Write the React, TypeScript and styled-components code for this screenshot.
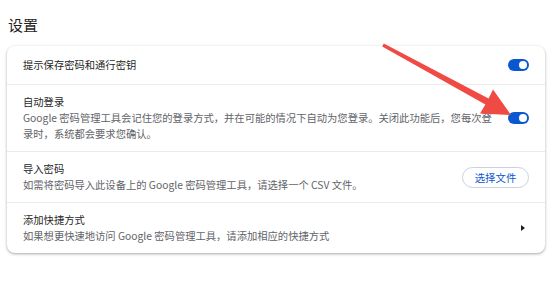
import React from 'react'
import styled, { createGlobalStyle } from 'styled-components'

const GlobalStyle = createGlobalStyle`
  html, body {
    margin: 0;
    padding: 0;
    background: #ffffff;
  }
  body {
    font-family: "Noto Sans CJK SC", "Liberation Sans", sans-serif;
    color: #1f1f1f;
  }
`

const Page = styled.div`
  position: relative;
  width: 554px;
  height: 302px;
  padding: 14px 9px 0 7px;
  box-sizing: border-box;
`

const Heading = styled.h2`
  margin: 0 0 11px 1px;
  font-size: 15px;
  line-height: 21px;
  font-weight: 400;
  color: #1f1f1f;
`

const Card = styled.section`
  background: #fff;
  border-radius: 8px;
  box-shadow: 0 1px 2px rgba(60, 64, 67, 0.3), 0 1px 3px 1px rgba(60, 64, 67, 0.12);
`

const Row = styled.div<{ $first?: boolean }>`
  display: flex;
  align-items: center;
  gap: 14px;
  min-height: 38px;
  box-sizing: border-box;
  padding: 9px 16px;
  border-top: ${(p) => (p.$first ? 'none' : '1px solid #ebebeb')};
`

const Texts = styled.div`
  flex: 1;
  min-width: 0;
  font-size: 10.3px;
  line-height: 16px;
`

const Label = styled.div`
  color: #1f1f1f;
`

const Sub = styled.div`
  color: #5f6368;
`

const Track = styled.span`
  flex: none;
  display: flex;
  align-items: center;
  justify-content: flex-end;
  width: 21px;
  height: 12px;
  padding: 0 2px;
  box-sizing: border-box;
  border-radius: 6px;
  background: #0b57d0;
`

const Knob = styled.span`
  width: 8px;
  height: 8px;
  border-radius: 50%;
  background: #fff;
`

const PillButton = styled.button`
  flex: none;
  width: 67px;
  height: 21px;
  padding: 0;
  border: 1px solid #c6d2e6;
  border-radius: 11px;
  background: #fff;
  color: #0b57d0;
  font-family: inherit;
  font-size: 10.4px;
  line-height: 19px;
`

const Chevron = styled.span`
  flex: none;
  width: 0;
  height: 0;
  margin-right: 4px;
  border-top: 3.5px solid transparent;
  border-bottom: 3.5px solid transparent;
  border-left: 4px solid #1f1f1f;
`

const Overlay = styled.svg`
  position: absolute;
  left: 0;
  top: 0;
  pointer-events: none;
`

function Toggle() {
  return (
    <Track>
      <Knob />
    </Track>
  )
}

export default function App() {
  return (
    <>
      <GlobalStyle />
      <Page>
        <Heading>设置</Heading>
        <Card>
          <Row $first>
            <Texts>
              <Label>提示保存密码和通行密钥</Label>
            </Texts>
            <Toggle />
          </Row>
          <Row>
            <Texts>
              <Label>自动登录</Label>
              <Sub>
                Google 密码管理工具会记住您的登录方式，并在可能的情况下自动为您登录。关闭此功能后，您每次登录时，系统都会要求您确认。
              </Sub>
            </Texts>
            <Toggle />
          </Row>
          <Row>
            <Texts>
              <Label>导入密码</Label>
              <Sub>如需将密码导入此设备上的 Google 密码管理工具，请选择一个 CSV 文件。</Sub>
            </Texts>
            <PillButton>选择文件</PillButton>
          </Row>
          <Row>
            <Texts>
              <Label>添加快捷方式</Label>
              <Sub>如果想更快速地访问 Google 密码管理工具，请添加相应的快捷方式</Sub>
            </Texts>
            <Chevron />
          </Row>
        </Card>
        <Overlay width="554" height="302" viewBox="0 0 554 302">
          <polygon
            points="383.8,43.6 488.6,98.5 493,89.5 511,115 480,113.5 485.4,104.5 382.2,46.4"
            fill="#f04a45"
          />
        </Overlay>
      </Page>
    </>
  )
}
